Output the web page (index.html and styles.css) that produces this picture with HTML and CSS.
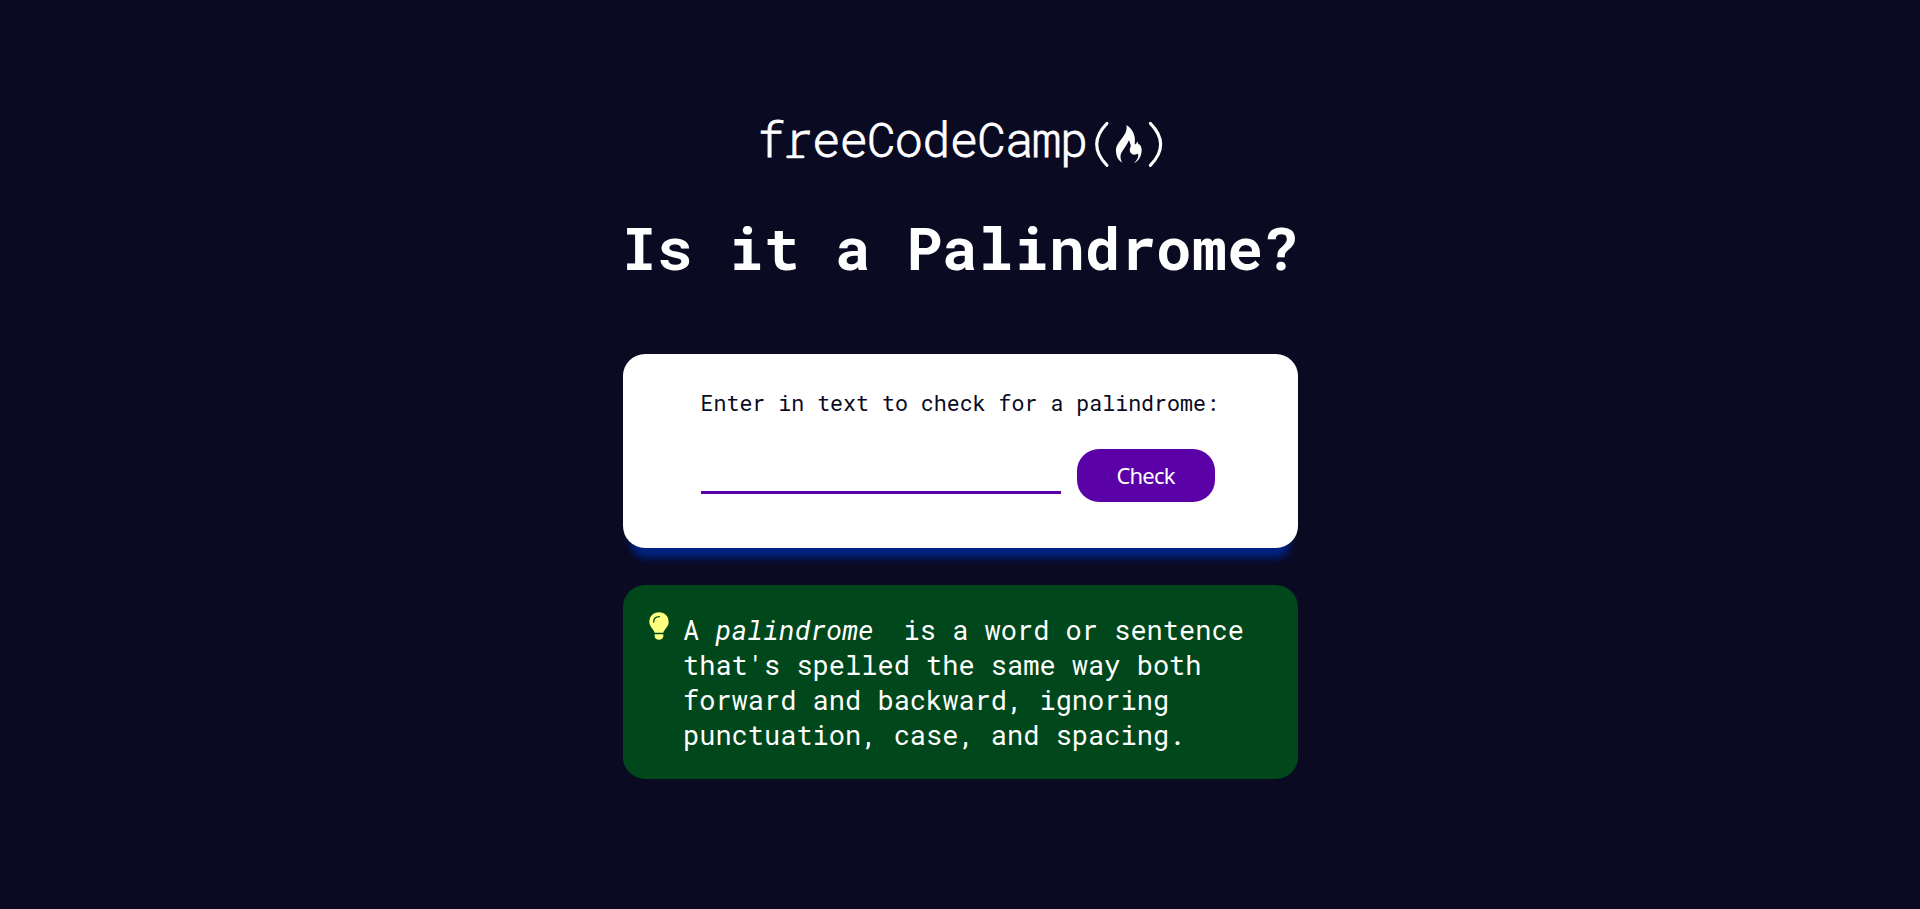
FILE: index.html
```html
<!DOCTYPE html>
<html lang="en">
<head>
<meta charset="UTF-8">
<title>Palindrome Checker</title>
<link rel="stylesheet" href="styles.css">
</head>
<body>
<main class="container">
  <svg class="logo" viewBox="54 60 1218 150" role="img" aria-label="freeCodeCamp">
    <text class="logo-text" x="51" y="172" textLength="994" lengthAdjust="spacing">freeCodeCamp</text>
    <path class="logo-paren" d="M143 170H189"/>
    <path class="logo-paren" d="M1101 70Q1039 133 1101 196M1231 70Q1293 133 1231 196"/>
    <path class="logo-flame" d="M1159 75C1163 92 1154 105 1142 120C1131 134 1127 143 1128 156C1129 171 1136 182 1146 188C1140 175 1140 165 1145 157C1152 146 1161 134 1167 121C1171 132 1175 137 1170 145C1167 155 1174 164 1182 164C1190 164 1193 160 1194 162C1197 172 1190 182 1182 189C1196 183 1205 168 1205 149C1205 139 1200 133 1195 132C1194 129 1193 126 1193 124C1189 131 1187 134 1184 133C1188 110 1180 88 1159 75Z"/>
  </svg>
  <h1 class="title">Is it a Palindrome?</h1>
  <section class="checker">
    <label class="checker-label" for="text-input">Enter in text to check for a palindrome:</label>
    <div class="checker-row">
      <input class="checker-input" id="text-input" type="text">
      <button class="checker-button" type="button">Check</button>
    </div>
  </section>
  <section class="definition">
    <svg class="bulb" viewBox="0 0 60 84" aria-hidden="true">
      <path d="M30 1C13 1 1 13 1 30C1 45 14 51 17 62H43C46 51 59 45 59 30C59 13 47 1 30 1Z"/>
      <path d="M17 67H43V72C43 79 38 83 30 83S17 79 17 72Z"/>
      <path class="bulb-shine" d="M14 30C14 20 20 14 31 14"/>
    </svg>
    <p class="definition-text">A <dfn class="term">palindrome</dfn> is a word or sentence that's spelled the same way both forward and backward, ignoring punctuation, case, and spacing.</p>
  </section>
</main>
</body>
</html>
```
FILE: styles.css
```css
* { box-sizing: border-box; }
body {
  margin: 0;
  min-height: 909px;
  background: #0a0a23;
  color: #fff;
  font-family: "Roboto Mono", "DejaVu Sans Mono", monospace;
}
.container {
  display: flex;
  flex-direction: column;
  align-items: center;
  width: 675px;
  margin: 0 auto;
  padding-top: 120px;
}
.logo { width: 406px; height: 50px; margin-left: 1px; overflow: visible; }
.logo-text {
  font-family: "Roboto Mono", "DejaVu Sans Mono", monospace;
  font-weight: 300;
  font-size: 143px;
  fill: #fff;
  stroke: #fff;
  stroke-width: 2.5;
}
.logo-paren { fill: none; stroke: #fff; stroke-width: 9; stroke-linecap: round; }
.logo-flame { fill: #fff; }
.title {
  margin: 38px 0 0;
  font-size: 59.4px;
  line-height: 78px;
  white-space: nowrap;
}
.checker {
  display: flex;
  flex-direction: column;
  width: 675px;
  height: 194px;
  margin-top: 68px;
  padding: 35px 78px 0;
  border-radius: 22px;
  background: #fff;
  color: #0a0a23;
  box-shadow: 0 18px 7px -8px #002280;
}
.checker-label {
  font-size: 21.6px;
  line-height: 28px;
  white-space: nowrap;
}
.checker-row {
  display: flex;
  gap: 16px;
  margin-top: 32px;
}
.checker-input {
  width: 360px;
  height: 45px;
  border: 0;
  border-bottom: 3px solid #5a01a7;
  background: transparent;
}
.checker-button {
  width: 138px;
  height: 53px;
  padding: 0 0 1px;
  border: 0;
  border-radius: 22px;
  background: #5a01a7;
  color: #fff;
  font: 22px "Noto Sans", sans-serif;
  letter-spacing: -0.8px;
}
.definition {
  display: flex;
  gap: 14px;
  width: 675px;
  height: 194px;
  margin-top: 37px;
  padding: 27px 27px 0 26.5px;
  border-radius: 22px;
  background: #00471b;
}
.bulb { flex: none; width: 20px; height: 28px; fill: #ffff80; }
.bulb-shine { fill: none; stroke: #00471b; stroke-width: 4; stroke-linecap: round; }
.definition-text {
  width: 575px;
  margin: 0;
  font-size: 27px;
  line-height: 35px;
}
.term { padding-right: 13.5px; font-style: italic; }
```
